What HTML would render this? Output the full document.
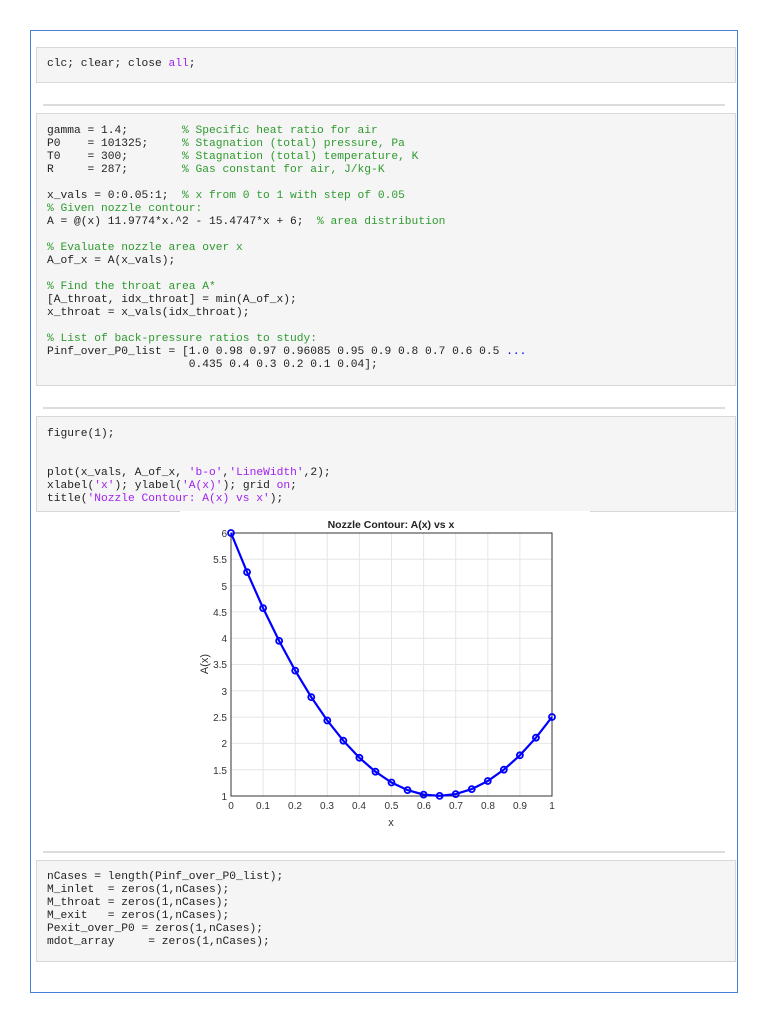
<!DOCTYPE html>
<html><head><meta charset="utf-8"><style>
body{margin:0;width:768px;height:1024px;background:#fff;position:relative;overflow:hidden}
.outer{position:absolute;left:30px;top:30px;width:706px;height:961px;border:1px solid #4a7fd6}
.blk{position:absolute;left:36px;width:698px;background:#f5f5f5;border:1px solid #d8d8d8}
.sep{position:absolute;left:43px;width:682px;height:2px;background:#dcdcdc}
pre{margin:0;position:absolute;left:10px;font:11.25px/13px "Liberation Mono",monospace;color:#222}
.c{color:#2e9a2e}.s{color:#a020f0}
</style></head><body>
<div class="outer"></div>
<div class="blk" style="top:47px;height:34px"><pre style="top:10px">clc; clear; close <span class="s">all</span>;</pre></div>
<div class="sep" style="top:104px"></div>
<div class="blk" style="top:113px;height:271px"><pre style="top:11px">gamma = 1.4;        <span class="c">% Specific heat ratio for air</span>
P0    = 101325;     <span class="c">% Stagnation (total) pressure, Pa</span>
T0    = 300;        <span class="c">% Stagnation (total) temperature, K</span>
R     = 287;        <span class="c">% Gas constant for air, J/kg-K</span>

x_vals = 0:0.05:1;  <span class="c">% x from 0 to 1 with step of 0.05</span>
<span class="c">% Given nozzle contour:</span>
A = @(x) 11.9774*x.^2 - 15.4747*x + 6;  <span class="c">% area distribution</span>

<span class="c">% Evaluate nozzle area over x</span>
A_of_x = A(x_vals);

<span class="c">% Find the throat area A*</span>
[A_throat, idx_throat] = min(A_of_x);
x_throat = x_vals(idx_throat);

<span class="c">% List of back-pressure ratios to study:</span>
Pinf_over_P0_list = [1.0 0.98 0.97 0.96085 0.95 0.9 0.8 0.7 0.6 0.5 <span style="color:#00f">...</span>
                     0.435 0.4 0.3 0.2 0.1 0.04];</pre></div>
<div class="sep" style="top:407px"></div>
<div class="blk" style="top:416px;height:94px"><pre style="top:11px">figure(1);


plot(x_vals, A_of_x, <span class="s">'b-o'</span>,<span class="s">'LineWidth'</span>,2);
xlabel(<span class="s">'x'</span>); ylabel(<span class="s">'A(x)'</span>); grid <span class="s">on</span>;
title(<span class="s">'Nozzle Contour: A(x) vs x'</span>);</pre></div>
<svg style="position:absolute;left:0;top:0" width="768" height="1024" font-family="Liberation Sans, sans-serif">
<rect x="180" y="511" width="410" height="320" fill="#fff"/>
<g stroke="#e6e6e6" stroke-width="1">
<line x1="263.1" y1="533" x2="263.1" y2="796"/><line x1="295.2" y1="533" x2="295.2" y2="796"/><line x1="327.3" y1="533" x2="327.3" y2="796"/><line x1="359.4" y1="533" x2="359.4" y2="796"/><line x1="391.5" y1="533" x2="391.5" y2="796"/><line x1="423.6" y1="533" x2="423.6" y2="796"/><line x1="455.7" y1="533" x2="455.7" y2="796"/><line x1="487.8" y1="533" x2="487.8" y2="796"/><line x1="519.9" y1="533" x2="519.9" y2="796"/>
<line x1="231" y1="559.3" x2="552" y2="559.3"/><line x1="231" y1="585.6" x2="552" y2="585.6"/><line x1="231" y1="611.9" x2="552" y2="611.9"/><line x1="231" y1="638.2" x2="552" y2="638.2"/><line x1="231" y1="664.5" x2="552" y2="664.5"/><line x1="231" y1="690.8" x2="552" y2="690.8"/><line x1="231" y1="717.1" x2="552" y2="717.1"/><line x1="231" y1="743.4" x2="552" y2="743.4"/><line x1="231" y1="769.7" x2="552" y2="769.7"/>
</g>
<rect x="231" y="533" width="321" height="263" fill="none" stroke="#333" stroke-width="1"/>
<text x="391" y="528" font-size="10.5" font-weight="bold" text-anchor="middle" fill="#222">Nozzle Contour: A(x) vs x</text>
<g font-size="10" fill="#333" text-anchor="end">
<text x="227" y="537">6</text><text x="227" y="563">5.5</text><text x="227" y="590">5</text><text x="227" y="616">4.5</text><text x="227" y="642">4</text><text x="227" y="668">3.5</text><text x="227" y="695">3</text><text x="227" y="721">2.5</text><text x="227" y="747">2</text><text x="227" y="774">1.5</text><text x="227" y="800">1</text>
</g>
<g font-size="10" fill="#333" text-anchor="middle">
<text x="231" y="809">0</text><text x="263" y="809">0.1</text><text x="295" y="809">0.2</text><text x="327" y="809">0.3</text><text x="359" y="809">0.4</text><text x="391.5" y="809">0.5</text><text x="424" y="809">0.6</text><text x="456" y="809">0.7</text><text x="488" y="809">0.8</text><text x="520" y="809">0.9</text><text x="552" y="809">1</text>
<text x="391" y="826" font-size="11">x</text>
<text transform="translate(208,664) rotate(-90)" font-size="11">A(x)</text>
</g>
<polyline fill="none" stroke="#0000ff" stroke-width="2.2" points="231,533 247.05,572.1 263.1,608.1 279.15,640.9 295.2,670.6 311.25,697.1 327.3,720.5 343.35,740.7 359.4,757.8 375.45,771.7 391.5,782.5 407.55,790.1 423.6,794.6 439.65,795.9 455.7,794.1 471.75,789.1 487.8,781 503.85,769.7 519.9,755.3 535.95,737.7 552,717"/>
<g fill="none" stroke="#0000ff" stroke-width="1.8">
<circle cx="231" cy="533" r="3"/><circle cx="247.05" cy="572.1" r="3"/><circle cx="263.1" cy="608.1" r="3"/><circle cx="279.15" cy="640.9" r="3"/><circle cx="295.2" cy="670.6" r="3"/><circle cx="311.25" cy="697.1" r="3"/><circle cx="327.3" cy="720.5" r="3"/><circle cx="343.35" cy="740.7" r="3"/><circle cx="359.4" cy="757.8" r="3"/><circle cx="375.45" cy="771.7" r="3"/><circle cx="391.5" cy="782.5" r="3"/><circle cx="407.55" cy="790.1" r="3"/><circle cx="423.6" cy="794.6" r="3"/><circle cx="439.65" cy="795.9" r="3"/><circle cx="455.7" cy="794.1" r="3"/><circle cx="471.75" cy="789.1" r="3"/><circle cx="487.8" cy="781" r="3"/><circle cx="503.85" cy="769.7" r="3"/><circle cx="519.9" cy="755.3" r="3"/><circle cx="535.95" cy="737.7" r="3"/><circle cx="552" cy="717" r="3"/>
</g>
</svg>
<div class="sep" style="top:851px"></div>
<div class="blk" style="top:860px;height:100px"><pre style="top:10px">nCases = length(Pinf_over_P0_list);
M_inlet  = zeros(1,nCases);
M_throat = zeros(1,nCases);
M_exit   = zeros(1,nCases);
Pexit_over_P0 = zeros(1,nCases);
mdot_array     = zeros(1,nCases);</pre></div>
</body></html>
